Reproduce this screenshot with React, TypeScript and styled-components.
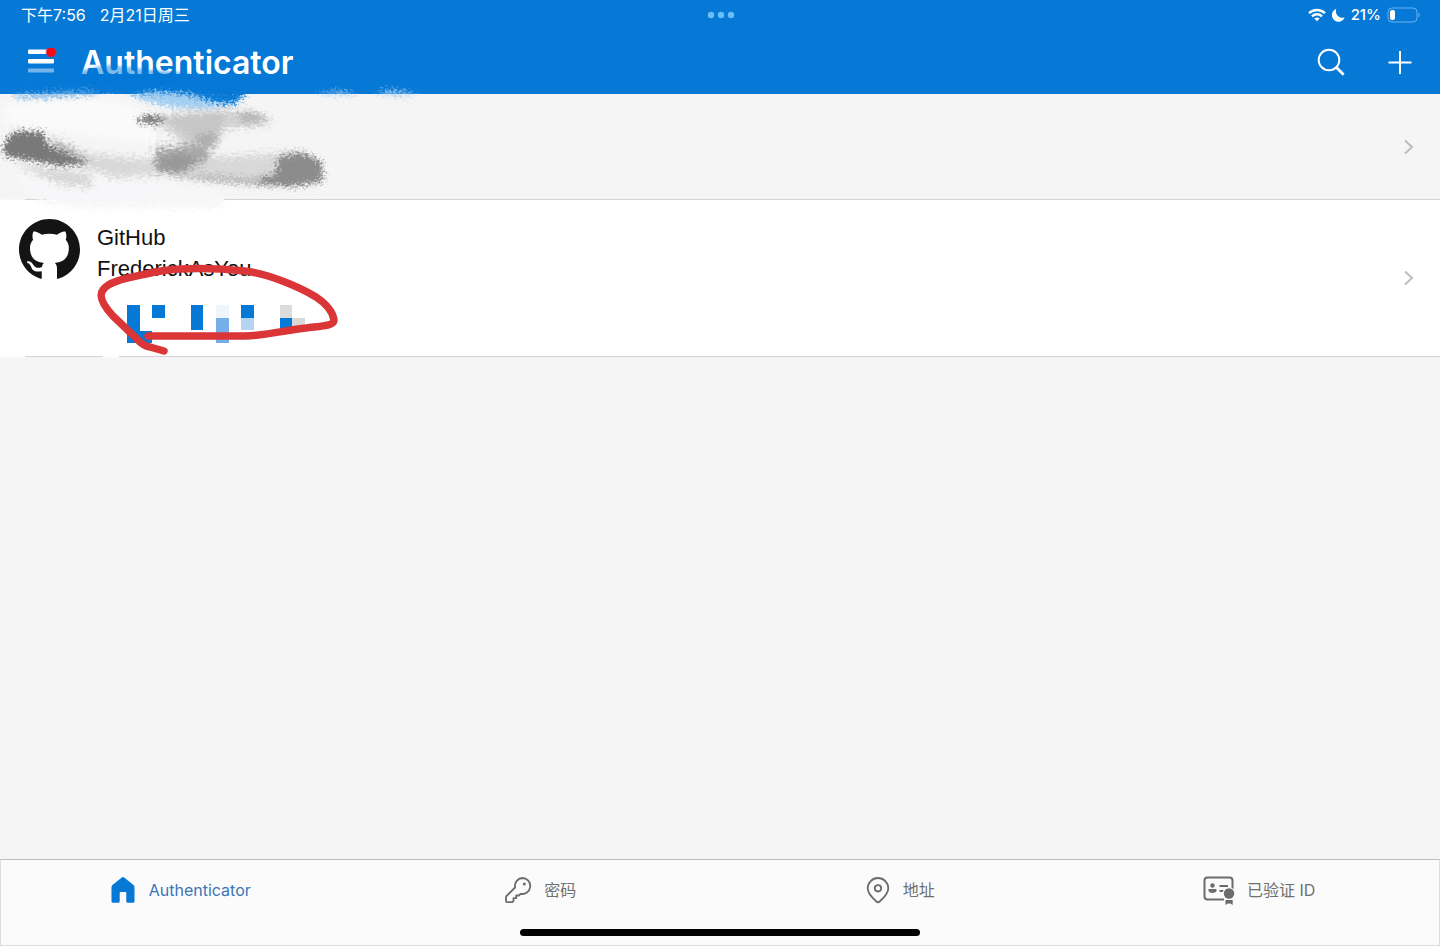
import React from "react";
import styled, { createGlobalStyle } from "styled-components";

const BLUE = "#0678d6";

const GlobalStyle = createGlobalStyle`
  *, *::before, *::after { box-sizing: border-box; }
  body {
    margin: 0;
    background: #f5f5f5;
    font-family: Inter, "Noto Sans CJK SC", sans-serif;
  }
`;

const Page = styled.div`
  position: relative;
  display: flex;
  flex-direction: column;
  min-height: 100vh;
  background: #f5f5f5;
`;

const Header = styled.header`
  background: ${BLUE};
  color: #fff;
`;

const StatusBar = styled.div`
  display: grid;
  grid-template-columns: 1fr auto 1fr;
  align-items: center;
  height: 30px;
  padding: 0 19px 0 21px;
  font-size: 15px;
  line-height: 20px;
  font-weight: 500;
`;

const StatusTime = styled.div`
  display: flex;
  gap: 14px;
  font-size: 16px;
  font-weight: 400;
`;

const StatusIcons = styled.div`
  display: flex;
  align-items: center;
  justify-content: flex-end;
  gap: 6px;
`;

const NavBar = styled.div`
  display: flex;
  align-items: center;
  height: 64px;
  padding: 2px 22px 0 26px;
`;

const IconButton = styled.button`
  display: flex;
  padding: 0;
  border: 0;
  background: none;
  color: inherit;
`;

const Title = styled.h1`
  flex: 1;
  margin: 0 0 0 23px;
  font-size: 32px;
  line-height: 40px;
  font-weight: 600;
`;

const NavActions = styled.div`
  display: flex;
  gap: 36px;
`;

const AccountList = styled.main`
  flex: 1;
`;

const AccountRow = styled.button<{ $height: number; $plain?: boolean }>`
  display: flex;
  align-items: center;
  width: 100%;
  min-height: ${(p) => p.$height}px;
  padding: 0 24px 0 19px;
  border: 0;
  border-bottom: 1px solid #d3d3d5;
  background: ${(p) => (p.$plain ? "#f5f5f5" : "#fff")};
  color: #111;
  font-family: inherit;
  text-align: left;
`;

const AccountBody = styled.span`
  display: flex;
  flex: 1;
  align-self: flex-start;
  gap: 17px;
  padding-top: 19px;
`;

const AccountNames = styled.span`
  display: flex;
  flex-direction: column;
  padding-top: 3px;
  font-family: "Liberation Sans", sans-serif;
  font-size: 22px;
  line-height: 31px;
`;

const Markup = styled.svg`
  position: absolute;
  top: 0;
  left: 0;
  pointer-events: none;
`;

const Footer = styled.footer`
  display: flex;
  flex-direction: column;
  align-items: center;
  gap: 9px;
  padding-bottom: 9px;
  border: 1px solid #dcdcdc;
  border-top-color: #bdbdbd;
  background: #fbfbfb;
`;

const Tabs = styled.nav`
  display: grid;
  grid-template-columns: repeat(4, 1fr);
  width: 100%;
  height: 60px;
`;

const Tab = styled.a<{ $active?: boolean }>`
  display: flex;
  align-items: center;
  justify-content: center;
  gap: 12px;
  color: ${(p) => (p.$active ? "#3b75b8" : "#707070")};
  font-size: 16px;
  line-height: 24px;
  text-decoration: none;
`;

const HomeIndicator = styled.div`
  width: 400px;
  height: 7px;
  border-radius: 4px;
  background: #000;
`;

const Dots = () => (
  <svg width="28" height="8" viewBox="0 0 28 8" fill="#69bdf8">
    <circle cx="4" cy="4" r="3.2" />
    <circle cx="14" cy="4" r="3.2" />
    <circle cx="24" cy="4" r="3.2" />
  </svg>
);

const Wifi = () => (
  <svg width="18" height="14" viewBox="0 0 18 14" fill="none" stroke="#fff" strokeWidth="2.400">
    <path d="M1 5.2C5.4.9 12.600.9 17 5.200" />
    <path d="M4 8.300C6.800 5.600 11.200 5.600 14 8.300" />
    <path d="M9 13.300 6.300 10.600C7.800 9.200 10.200 9.200 11.700 10.600Z" fill="#fff" stroke="none" />
  </svg>
);

const Moon = () => (
  <svg width="13" height="14" viewBox="0 0 13 14" fill="#fff">
    <path d="M4.300.8A6.600 6.600 0 1 0 12.700 9.200 5.300 5.300 0 0 1 8.300 9.400C4.800 8.400 3 4.600 4.300.8Z" />
  </svg>
);

const Battery = () => (
  <svg width="34" height="16" viewBox="0 0 34 16">
    <rect x="1" y="1" width="29" height="14" rx="4" fill="none" stroke="#6cb2ee" />
    <rect x="3" y="3" width="5" height="10" rx="2" fill="#fff" />
    <path d="M31.500 5.500c1.500.6 1.500 4.400 0 5Z" fill="#6cb2ee" />
  </svg>
);

const MenuIcon = () => (
  <svg width="32" height="30" viewBox="0 0 32 30">
    <g fill="#fff">
      <rect x="2" y="1.500" width="26" height="4.500" rx="1" />
      <rect x="2" y="11" width="26" height="4.500" rx="1" />
      <rect x="2" y="20.500" width="26" height="4" rx="1" opacity=".45" />
    </g>
    <circle cx="25" cy="4" r="5.500" fill="#c92753" opacity=".7" />
    <circle cx="25" cy="4" r="4.400" fill="#f4090e" />
  </svg>
);

const SearchIcon = () => (
  <svg width="30" height="30" viewBox="0 0 30 30" fill="none" stroke="#fff" strokeWidth="2">
    <circle cx="13" cy="12" r="10.300" />
    <path d="m20.500 19.500 7.200 7.200" strokeWidth="2.700" />
  </svg>
);

const PlusIcon = () => (
  <svg width="36" height="30" viewBox="0 0 36 30" fill="none" stroke="#fff" strokeWidth="2">
    <path d="M18 3v23M6.500 14.500h23" />
  </svg>
);

const GitHubIcon = () => (
  <svg width="61" height="61" viewBox="0 0 16 16" fill="#141414">
    <path d="M8 0C3.580 0 0 3.580 0 8c0 3.540 2.290 6.530 5.470 7.590.200.070.400.080.500.020V13.700c-2.010.370-2.530-.490-2.690-.940-.090-.230-.480-.940-.820-1.130-.280-.150-.680-.520-.010-.530.630-.010 1.080.580 1.230.820.720 1.210 1.870.870 2.330.660.070-.520.280-.870.510-1.070-1.780-.200-3.640-.890-3.640-3.950 0-.870.310-1.590.820-2.150-.080-.200-.360-1.020.080-2.120 0 0 .670-.210 2.200.820.640-.180 1.320-.270 2-.270s1.360.090 2 .270c1.530-1.040 2.200-.820 2.200-.820.440 1.100.160 1.920.080 2.120.510.560.820 1.270.820 2.150 0 3.070-1.870 3.750-3.650 3.950.290.250.540.730.540 1.480V15.600c.1.060.300.060.5 0A8.010 8.010 0 0 0 16 8c0-4.420-3.580-8-8-8Z" />
  </svg>
);

const Chevron = () => (
  <svg width="14" height="18" viewBox="0 0 14 18" fill="none" stroke="#bdbdc1" strokeWidth="2">
    <path d="m3 2.500 7 6.500-7 6.500" />
  </svg>
);

const HomeIcon = () => (
  <svg width="26" height="28" viewBox="0 0 26 28" fill={BLUE}>
    <path d="M10.500 1.700a2.300 2.300 0 0 1 3 0l8.700 7.100c.9.700 1.300 1.600 1.300 2.700v13.700a1.500 1.500 0 0 1-1.500 1.500h-5.200a1.500 1.500 0 0 1-1.500-1.500v-8.200a1 1 0 0 0-1-1h-4.600a1 1 0 0 0-1 1v8.200a1.500 1.500 0 0 1-1.500 1.500H2a1.500 1.500 0 0 1-1.500-1.500V11.500c0-1.100.4-2 1.300-2.700Z" />
  </svg>
);

const KeyIcon = () => (
  <svg width="28" height="28" viewBox="0 0 28 28" fill="none" stroke="#6b6b6b" strokeWidth="1.800" strokeLinejoin="round">
    <path d="M18.300 2a8 8 0 1 1-1.800 15.800L14.800 19.500h-2.600v2.700H9.500V25l-1.200 1.200H3.200a1.200 1.200 0 0 1-1.200-1.200v-3.800c0-.5.2-.9.5-1.200l8.600-8.500A8 8 0 0 1 18.300 2Z" />
    <circle cx="20.300" cy="8" r="1.500" fill="#6b6b6b" stroke="none" />
  </svg>
);

const PinIcon = () => (
  <svg width="26" height="28" viewBox="0 0 26 28" fill="none" stroke="#6b6b6b" strokeWidth="1.800" strokeLinejoin="round">
    <path d="M13 2a10.300 10.300 0 0 1 10.300 10.300c0 4.400-3.300 8.500-8.600 13.200a2.600 2.600 0 0 1-3.400 0C6 20.800 2.700 16.700 2.700 12.300A10.300 10.300 0 0 1 13 2Z" />
    <circle cx="13" cy="12.300" r="3.200" />
  </svg>
);

const IdIcon = () => (
  <svg width="32" height="30" viewBox="0 0 32 30" fill="#6b6b6b">
    <rect x="1.500" y="2.500" width="28" height="22" rx="3" fill="none" stroke="#6b6b6b" strokeWidth="2" />
    <circle cx="9.500" cy="10.500" r="2.200" />
    <path d="M5.500 14h8v1.200c0 3.700-8 3.700-8 0Z" />
    <path d="M16.500 10h8.500v2h-8.500ZM16.500 15h4v2h-4Z" />
    <circle cx="26" cy="18.500" r="6.300" fill="#fbfbfb" />
    <path d="M21 23h10v6H21Z" fill="#fbfbfb" />
    <circle cx="26" cy="18.500" r="5.200" />
    <path d="M22.500 25h7.200v5l-2.300-1.500h-2.500l-2.400 1.500Z" />
  </svg>
);

type Cell = [number, number, number, number, string];
const cells: Cell[] = [
  [127, 305, 13, 38, BLUE],
  [140, 331, 12, 12, BLUE],
  [152, 305, 13, 13, BLUE],
  [191, 305, 12, 25, BLUE],
  [216, 305, 13, 13, "#eff5fa"],
  [216, 318, 13, 25, "#75aee8"],
  [241, 305, 13, 13, BLUE],
  [241, 318, 13, 12, "#b5d4f2"],
  [280, 305, 12, 13, "#dcdcda"],
  [280, 318, 12, 12, BLUE],
  [292, 318, 13, 8, "#dadada"],
];

const Annotations = () => (
  <Markup width="440" height="370" viewBox="0 0 440 370" aria-hidden="true">
    <defs>
      <filter id="brush" x="-10%" y="-30%" width="120%" height="160%" colorInterpolationFilters="sRGB">
        <feTurbulence type="fractalNoise" baseFrequency=".35 .45" numOctaves="3" seed="8" result="n" />
        <feGaussianBlur in="SourceGraphic" stdDeviation="2" result="b" />
        <feDisplacementMap in="b" in2="n" scale="16" xChannelSelector="R" yChannelSelector="G" />
      </filter>
      <filter id="soft" x="-20%" y="-40%" width="140%" height="180%" colorInterpolationFilters="sRGB">
        <feTurbulence type="fractalNoise" baseFrequency=".25 .4" numOctaves="3" seed="3" result="n" />
        <feGaussianBlur in="SourceGraphic" stdDeviation="3" result="b" />
        <feDisplacementMap in="b" in2="n" scale="18" xChannelSelector="R" yChannelSelector="G" />
      </filter>
      <filter id="haze" x="-10%" y="-30%" width="120%" height="160%">
        <feGaussianBlur stdDeviation="1.500" />
      </filter>
    </defs>

    {/* brushed edge of the header */}
    <path d="M80 71 105 65 128 67 150 70 190 73 190 82H78Z" fill={BLUE} opacity=".5" filter="url(#haze)" />
    <g filter="url(#brush)">
      <path d="M12 90H124L140 94Q175 109 200 109L234 104 246 95 240 90Z" fill={BLUE} />
      <path d="M10 95 60 92 90 91 100 94 45 98 20 98Z" fill="#69ace5" />
      <path d="M132 96 152 92 188 94 215 102 232 104 210 109 178 108 155 104Z" fill="#a5cff0" />
      <path d="M312 94 342 91 360 95ZM375 93 390 90 418 94 400 96Z" fill="#a9d0f0" />
    </g>

    {/* pale strokes of the eraser */}
    <g filter="url(#soft)">
      <path d="M5 104 110 100 160 114 150 145 90 135 55 130 5 125Z" fill="#fafafa" />
      <path d="M14 168 85 180 120 177 220 192 222 208 80 208 45 203 18 185Z" fill="#f7f7f9" />
      <path d="M12 164 90 174 92 188 60 184Z" fill="#d6d6d6" />
    </g>
    <path d="M0 198H25V200H0ZM140 198H224V202H140Z" fill="#f8f8f9" />
    <path d="M0 355H25V358H0ZM103 355H119V358H103Z" fill="#fcfcfc" />

    {/* grey strokes */}
    <g filter="url(#soft)">
      <path d="M150 118 220 110 262 116 270 125 225 128 212 150 196 158 175 135Z" fill="#cfcfcf" />
      <path d="M52 140 90 154 155 160 165 150 210 157 300 152 320 180 270 185 165 174 115 178 80 165Z" fill="#d8d8d8" />
      <path d="M155 148 205 144 210 158 180 174 155 170Z" fill="#a8a8a8" />
      <path d="M48 138 66 145 88 162 62 160Z" fill="#b0b0b0" />
    </g>
    <g filter="url(#brush)">
      <path d="M3 146 9 136 18 131 42 132 50 146 70 155 90 163 60 166 5 156Z" fill="#797979" />
      <path d="M137 118 150 115 166 119 158 124 140 123Z" fill="#777" />
      <path d="M160 117 225 112 216 148 192 135Z" fill="#bebebe" opacity=".5" />
      <path d="M192 136 216 133 216 144 205 150Z" fill="#a0a0a0" opacity=".6" />
      <path d="M235 114 250 111 272 120 245 123Z" fill="#b8b8b8" />
      <path d="M158 160 180 153 198 160 180 172 160 171Z" fill="#959595" opacity=".8" />
      <path d="M278 157 302 152 322 162 323 181 292 187 235 182 276 174Z" fill="#8c8c8c" />
      <path d="M165 174 205 174 265 179 250 185 200 180Z" fill="#bcbcbc" />
    </g>

    {/* pixelated code */}
    <g shapeRendering="crispEdges">
      {cells.map(([x, y, w, h, fill]) => (
        <rect key={`${x}-${y}`} x={x} y={y} width={w} height={h} fill={fill} />
      ))}
    </g>
    <path
      d="M164 351 150 347Q143 346 136 338L113 316C103 305 98 296 103 290C109 280 134 277 155 272C180 267 218 268 245 271C268 274 298 286 316 297C328 305 333 313 334 320C334 326 322 326 306 328C286 330 270 335 245 336L148 336"
      fill="none"
      stroke="#da3537"
      strokeWidth="7.500"
      strokeLinecap="round"
      strokeLinejoin="round"
    />
  </Markup>
);

export default function App() {
  return (
    <>
      <GlobalStyle />
      <Page>
        <Header>
          <StatusBar>
            <StatusTime>
              <span>下午7:56</span>
              <span>2月21日周三</span>
            </StatusTime>
            <Dots />
            <StatusIcons>
              <Wifi />
              <Moon />
              <span>21%</span>
              <Battery />
            </StatusIcons>
          </StatusBar>
          <NavBar>
            <IconButton type="button" aria-label="菜单">
              <MenuIcon />
            </IconButton>
            <Title>Authenticator</Title>
            <NavActions>
              <IconButton type="button" aria-label="搜索">
                <SearchIcon />
              </IconButton>
              <IconButton type="button" aria-label="添加">
                <PlusIcon />
              </IconButton>
            </NavActions>
          </NavBar>
        </Header>

        <AccountList>
          <AccountRow type="button" aria-label="帐户" $height={106} $plain>
            <AccountBody />
            <Chevron />
          </AccountRow>
          <AccountRow type="button" $height={157}>
            <AccountBody>
              <GitHubIcon />
              <AccountNames>
                <span>GitHub</span>
                <span>FrederickAsYou</span>
              </AccountNames>
            </AccountBody>
            <Chevron />
          </AccountRow>
        </AccountList>

        <Footer>
          <Tabs>
            <Tab href="#authenticator" $active>
              <HomeIcon />
              Authenticator
            </Tab>
            <Tab href="#passwords">
              <KeyIcon />
              密码
            </Tab>
            <Tab href="#addresses">
              <PinIcon />
              地址
            </Tab>
            <Tab href="#verified-id">
              <IdIcon />
              已验证 ID
            </Tab>
          </Tabs>
          <HomeIndicator />
        </Footer>
        <Annotations />
      </Page>
    </>
  );
}
